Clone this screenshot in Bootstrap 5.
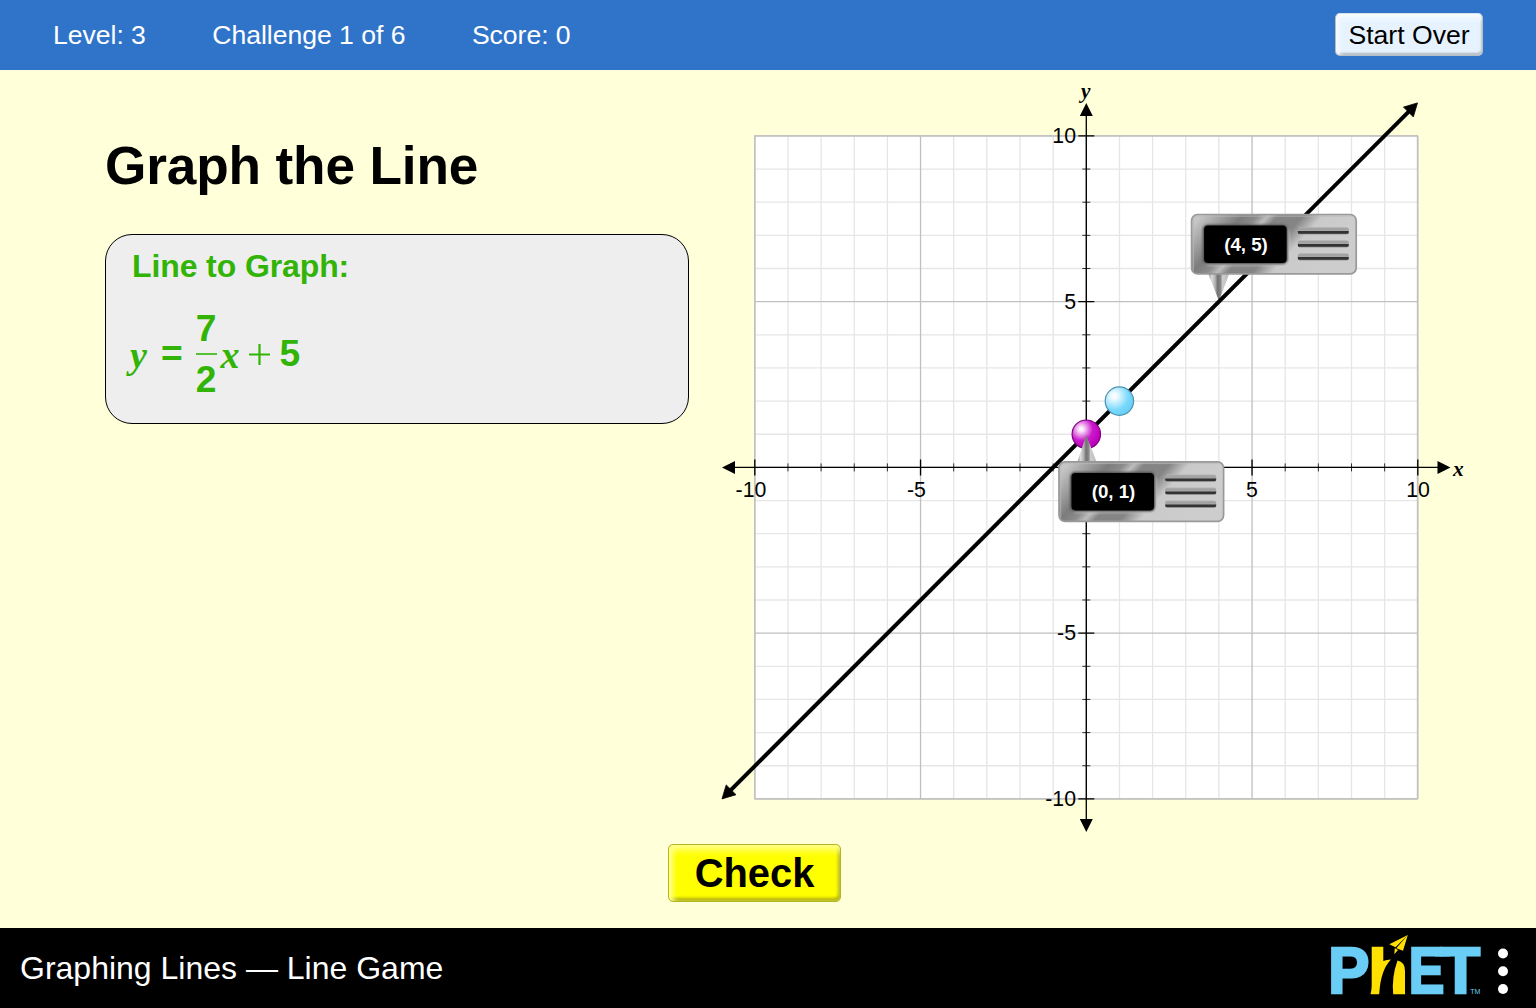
<!DOCTYPE html>
<html lang="en">
<head>
<meta charset="utf-8">
<meta name="viewport" content="width=device-width, initial-scale=1">
<title>Graphing Lines — Line Game</title>
<link href="https://cdn.jsdelivr.net/npm/bootstrap@5.3.0/dist/css/bootstrap.min.css" rel="stylesheet">
<style>
body{font-family:"Liberation Sans",Arial,sans-serif;background:#ffffd9;color:#000;height:1008px;overflow:hidden}
.status-bar{height:69.5px;flex:none;background:#3074ca;font-size:26.6px;line-height:1;padding:0 53px}
.status-items{gap:66.5px;padding-top:2px}
.status-items span{letter-spacing:-.04px}
.btn-restart{width:148px;height:43px;font-size:26.6px;line-height:1;color:#000;border-radius:5px;border:1px solid #b7bfc6;border-top-color:#d5e3ef;padding:2px 0 0;background:#e6f3ff;box-shadow:inset 0 5px 5px -1px #f7fbff,inset 4px 0 4px -1px #f7fbff,inset -1px -2px 2px #a3acb5}
.play-area{height:766px;flex:none}
.task-side{width:700px;padding:71px 11px 0 105px;flex:none}
.task-title{font-size:53.2px;font-weight:700;line-height:50px;margin:0 0 43px;white-space:nowrap;letter-spacing:-.15px}
.task-card{height:190px;width:584px;background:#eee;border:1.4px solid #000;border-radius:27px;color:#32b406;font-weight:700;padding:14px 22px}
.task-label{font-size:32px;line-height:34px;margin:0 0 27.5px;padding-left:4px;letter-spacing:-.11px}
.equation{font-size:37.2px;line-height:37.2px;height:88px}
.math-var{font-family:"Liberation Serif","Times New Roman",serif;font-style:italic;font-size:38px;position:relative;top:1.5px}
.term-y{width:33px;padding-left:2px}
.term-eq{width:34.5px}
.fraction{width:21px;gap:6px}
.fraction-bar{height:2px;background:#32b406;width:21px;opacity:.8}
.term-x{width:22px;margin-left:4px}
.plus-sign{width:21px;height:21px;margin:0 9.5px 0 6.5px}
.check-row{height:92px;padding:8px 0 0 668px;flex:none}
.btn-check-line{width:173px;height:58px;font-size:39.9px;font-weight:700;line-height:1;color:#000;background:#ff0;border-radius:5px;border:1px solid #b5b52a;padding:3px 0 0;box-shadow:inset 0 7px 7px -2px #ffff8c,inset 5px 0 5px -1px #ffff8c,inset -2px -3px 3px #a9a900}
.btn-check-line:hover{background:#ffff3a}
.sim-footer{height:80.5px;flex:none;background:#000;color:#fff;font-size:32px;padding-left:20px}
svg text{font-family:"Liberation Sans",Arial,sans-serif}
svg .axis-name{font-family:"Liberation Serif","Times New Roman",serif;font-style:italic;font-weight:700;font-size:21.3px}
svg .logo-letter{font-weight:700;font-size:63.5px;fill:#6acdf5;stroke:#6acdf5;stroke-width:2.6px}
</style>
</head>
<body class="d-flex flex-column m-0">
<header class="status-bar d-flex align-items-center justify-content-between text-white">
  <div class="status-items d-flex"><span>Level: 3</span><span>Challenge 1 of 6</span><span>Score: 0</span></div>
  <button type="button" class="btn btn-restart">Start Over</button>
</header>
<main class="flex-grow-1 d-flex flex-column">
  <div class="play-area d-flex">
    <section class="task-side">
      <h1 class="task-title">Graph the Line</h1>
      <div class="task-card">
        <h2 class="task-label fw-bold">Line to Graph:</h2>
        <div class="equation d-flex align-items-center">
          <span class="math-var term-y">y</span><span class="term-eq">=</span>
          <span class="fraction d-flex flex-column align-items-center"><span>7</span><span class="fraction-bar"></span><span>2</span></span>
          <span class="math-var term-x">x</span>
          <svg class="plus-sign" viewBox="0 0 21 21"><path d="M0 10.5h21M10.5 0v21" stroke="#32b406" stroke-width="2.2"/></svg>
          <span>5</span>
        </div>
      </div>
    </section>
    <svg width="800" height="766" viewBox="700 70.1 800 766" role="img" aria-label="Graph">
      <defs>
        <linearGradient id="metalFace" gradientUnits="userSpaceOnUse" x1="5" y1="8" x2="98" y2="91">
          <stop offset="0" stop-color="#c6c6c6"/><stop offset=".13" stop-color="#a0a0a0"/><stop offset=".25" stop-color="#7c7c7c"/><stop offset=".34" stop-color="#8c8c8c"/><stop offset=".4" stop-color="#bdbdbd"/><stop offset=".46" stop-color="#858585"/><stop offset=".61" stop-color="#848484"/><stop offset=".73" stop-color="#cacaca"/><stop offset="1" stop-color="#cdcdcd"/>
        </linearGradient>
        <linearGradient id="spike"><stop offset="0" stop-color="#888"/><stop offset=".18" stop-color="#ddd"/><stop offset=".35" stop-color="#aaa"/><stop offset=".45" stop-color="#707070"/><stop offset=".6" stop-color="#8c8c8c"/><stop offset=".67" stop-color="#ccc"/><stop offset="1" stop-color="#bbb"/></linearGradient>
        <linearGradient id="slot" x2="0" y2="1"><stop offset="0" stop-color="#b4b4b4"/><stop offset=".2" stop-color="#a0a0a0"/><stop offset=".5" stop-color="#a6a6a6"/><stop offset=".58" stop-color="#333"/><stop offset=".84" stop-color="#333"/><stop offset="1" stop-color="#999"/></linearGradient>
        <radialGradient id="magentaBall" cx=".32" cy=".32" r=".7"><stop offset="0" stop-color="#fff"/><stop offset=".12" stop-color="#fbe4fb"/><stop offset=".58" stop-color="#cc19cc"/><stop offset="1" stop-color="#bd00bd"/></radialGradient>
        <radialGradient id="blueBall" cx=".32" cy=".32" r=".76"><stop offset="0" stop-color="#fff"/><stop offset=".15" stop-color="#effaff"/><stop offset=".65" stop-color="#7ad9fc"/><stop offset="1" stop-color="#66ccf4"/></radialGradient>
        <filter id="soft" x="-10%" y="-10%" width="120%" height="120%"><feGaussianBlur stdDeviation=".8"/></filter>
        <g id="readout">
          <rect x=".8" y=".8" width="164.6" height="59.4" rx="6" fill="url(#metalFace)" stroke="#999" stroke-width="1.7"/>
          <path d="M2.5 57V7Q2.5 2.5 7 2.5H160" fill="none" stroke="#bbb" stroke-width="1" opacity=".7"/>
          <rect x="13.5" y="12.5" width="85" height="39.5" rx="6" fill="#ddd" filter="url(#soft)" opacity=".7"/>
          <rect x="12" y="11" width="85" height="39.5" rx="5" fill="#444" filter="url(#soft)"/>
          <rect x="13.3" y="11.8" width="82.5" height="37.5" rx="4" fill="#000"/>
          <rect x="107" y="13.5" width="51" height="7.2" rx="2.5" fill="url(#slot)"/>
          <rect x="107" y="26.5" width="51" height="7.2" rx="2.5" fill="url(#slot)"/>
          <rect x="107" y="39.5" width="51" height="7.2" rx="2.5" fill="url(#slot)"/>
        </g>
      </defs>
      <rect x="754.8" y="136" width="663" height="663" fill="#fff"/>
      <path id="minorGrid" stroke="#e6e6e6" stroke-width="1.33"/>
      <path id="majorGrid" stroke="#c0c0c0" stroke-width="1.33"/>
      <rect x="754.8" y="136" width="662.7" height="663" fill="none" stroke="#c0c0c0" stroke-width="1.4"/>
      <path d="M733 467.5H1440M1086.3 114V821" stroke="#000" stroke-width="1.33"/>
      <path d="M722 467.5L735 461V474ZM1450.5 467.5L1437.500 461V474ZM1086.3 103L1079.800 116H1092.800ZM1086.300 832L1079.800 819H1092.800Z"/>
      <path id="minorTicks" stroke="#000" stroke-width=".8"/>
      <path id="majorTicks" stroke="#000" stroke-width="1.33"/>
      <g font-size="21.3">
        <g text-anchor="middle"><text x="751" y="497">-10</text><text x="916.5" y="497">-5</text><text x="1252" y="497">5</text><text x="1418" y="497">10</text></g>
        <g text-anchor="end"><text x="1076" y="143">10</text><text x="1076" y="309">5</text><text x="1076" y="640.500">-5</text><text x="1076" y="806.500">-10</text></g>
      </g>
      <text class="axis-name" x="1081" y="98">y</text>
      <text class="axis-name" x="1453" y="476">x</text>
      <path d="M1208 273H1229.500L1219 301Z" fill="url(#spike)"/>
      <path d="M729 792L1410.500 110" stroke="#000" stroke-width="4"/>
      <path d="M1417.500 103L1413.300 117L1403.500 107.200ZM722 799L726.200 785L736 794.800Z" stroke="#000" stroke-width=".8"/>
      <circle cx="1119.400" cy="401.200" r="14.200" fill="url(#blueBall)" stroke="#4b92ad" stroke-width="1.200"/>
      <circle cx="1086.300" cy="434.300" r="14.200" fill="url(#magentaBall)" stroke="#7e007e" stroke-width="1.200"/>
      <path d="M1077 463L1086.300 435L1097 463Z" fill="url(#spike)"/>
      <use href="#readout" x="1190.800" y="213.800"/>
      <use href="#readout" x="1058.200" y="461.200"/>
      <g fill="#fff" font-size="18.700" font-weight="700" text-anchor="middle"><text x="1246" y="251">(4, 5)</text><text x="1113.500" y="498.500">(0, 1)</text></g>
    </svg>
  </div>
  <div class="check-row"><button type="button" class="btn btn-check-line">Check</button></div>
</main>
<footer class="sim-footer d-flex align-items-center justify-content-between">
  <span>Graphing Lines — Line Game</span>
  <svg width="226" height="80" viewBox="1310 928 226 80" role="img" aria-label="PhET">
    <text class="logo-letter" transform="translate(1328.200 993) scale(.97 1.02)">P</text>
    <text class="logo-letter" transform="translate(1408.800 993) scale(.84 1.02)">E</text>
    <text class="logo-letter" transform="translate(1441.300 993) scale(1 1.02)">T</text>
    <path d="M1435 947.200H1450V956.500H1435Z" fill="#6acdf5"/>
    <path d="M1371.700 946.800H1383.300V961Q1386.500 959.500 1391 959.500Q1380.500 970 1379.200 994.300H1370.500Q1371.700 990 1371.700 985ZM1397.500 960.500Q1405 962 1405 971V994.300H1393.200Q1391.500 977 1397.500 960.500Z" fill="#ffe000"/>
    <path d="M1407.800 935L1389.300 944.300L1395.500 947.300ZM1407.800 935L1396.300 948.200L1403 950.800ZM1394.800 948.300L1394.300 954.300L1398 950Z" fill="#ffe000"/>
    <text x="1470.300" y="994" font-size="7" fill="#6acdf5">TM</text>
    <g fill="#fff"><circle cx="1503" cy="953.500" r="5"/><circle cx="1503" cy="971.200" r="5"/><circle cx="1503" cy="989" r="5"/></g>
  </svg>
</footer>
<script src="https://cdn.jsdelivr.net/npm/bootstrap@5.3.0/dist/js/bootstrap.bundle.min.js"></script>
<script>
// Grid and axis ticks, one unit apart, from -10 to 10.
const unit = 33.15, ox = 1086.3, oy = 467.5;
const grid = {minor: '', major: ''}, ticks = {minor: '', major: ''};
for (let i = -10; i <= 10; i++) {
  const kind = i % 5 ? 'minor' : 'major', x = ox + i * unit, y = oy + i * unit, half = i % 5 ? 4 : 8;
  grid[kind] += `M${x} 136V799M754.8 ${y}H1417.5`;
  if (i) ticks[kind] += `M${x} ${oy - half}v${half * 2}M${ox - half} ${y}h${half * 2}`;
}
minorGrid.setAttribute('d', grid.minor);
majorGrid.setAttribute('d', grid.major);
minorTicks.setAttribute('d', ticks.minor);
majorTicks.setAttribute('d', ticks.major);
</script>
</body>
</html>
